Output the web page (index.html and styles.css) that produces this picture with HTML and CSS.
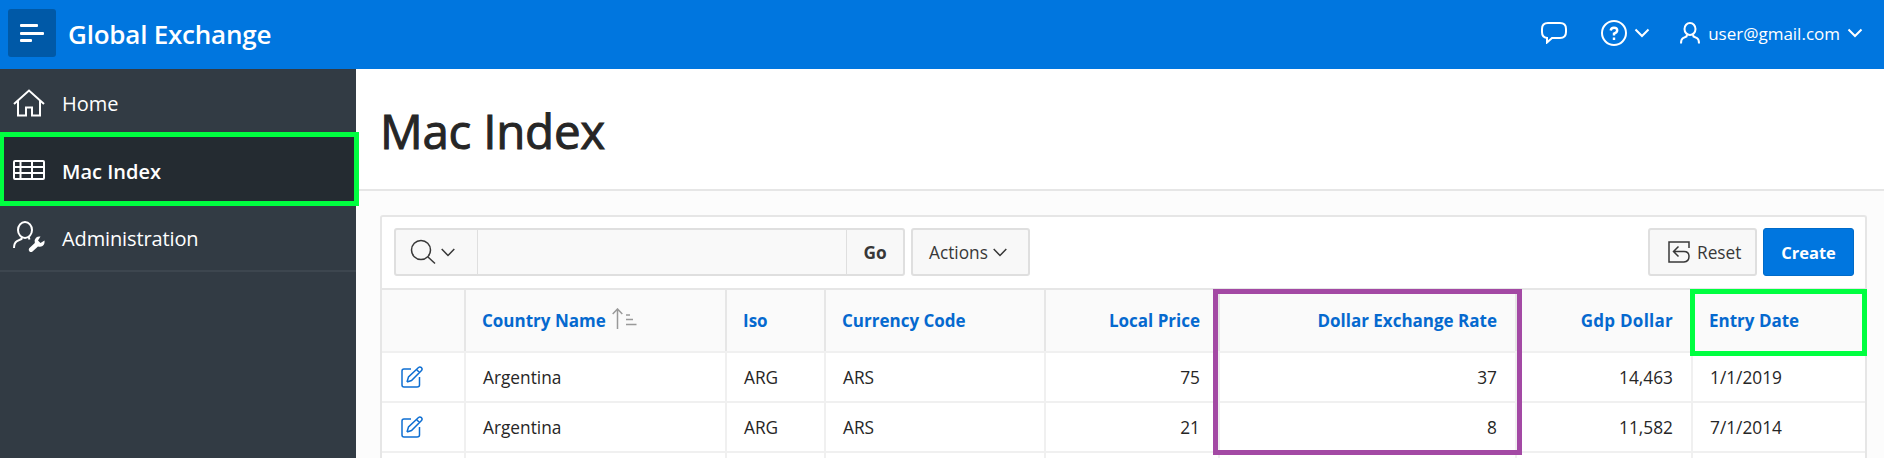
FILE: index.html
```html
<!DOCTYPE html>
<html lang="en">
<head>
<meta charset="utf-8">
<title>Mac Index</title>
<link rel="stylesheet" href="styles.css">
</head>
<body>
<header class="topbar">
  <button class="menu-btn" aria-label="Menu"><svg width="24" height="18" viewBox="0 0 24 18" fill="#fff"><rect width="18" height="3" rx="1"/><rect y="8" width="24" height="3" rx="1"/><rect y="15" width="12" height="3" rx="1"/></svg></button>
  <span class="brand">Global Exchange</span>
  <div class="topnav">
    <svg class="chat" width="26" height="22" viewBox="0 0 26 22"><path d="M7 1H19Q25 1 25 7V10Q25 16 19 16H11L6 20.500V16Q1 15.500 1 10V7Q1 1 7 1Z"/></svg>
    <svg class="help" width="26" height="26" viewBox="0 0 26 26"><circle cx="13" cy="13" r="12"/><path stroke-width="2.400" d="M9.700 10.500Q10 7.700 13 7.700Q16.200 7.700 16.200 10.300Q16.200 12.500 13 13.600V15.500M13 17.600V20"/></svg>
    <svg class="chev chev-help" width="16" height="10" viewBox="0 0 16 10"><path d="M1.500 1.500L8 8L14.500 1.500"/></svg>
    <svg class="person" width="20" height="22" viewBox="0 0 20 22"><ellipse cx="10" cy="7" rx="5.500" ry="6"/><path d="M7 12.500L6.500 14.500L3 16.200Q1 17.300 1 21.500M13 12.500L13.500 14.500L17 16.200Q19 17.300 19 21.500"/></svg>
    <span class="user">user@gmail.com</span>
    <svg class="chev" width="16" height="10" viewBox="0 0 16 10"><path d="M1.500 1.500L8 8L14.500 1.500"/></svg>
  </div>
</header>
<div class="body">
  <nav class="sidebar">
    <a class="item"><svg width="32" height="28" viewBox="0 0 32 28"><path d="M1 15L16 1.500L31 15M5 12V26.500H13V18.500H19V26.500H27V12"/></svg><span class="n-home">Home</span></a>
    <a class="item current"><svg width="32" height="20" viewBox="0 0 32 20"><rect x="1" y="1" width="30" height="18" rx="1"/><path d="M1 7H31M1 13H31M7.500 1V19M19 1V19"/></svg><span class="n-mac">Mac Index</span></a>
    <a class="item"><svg width="32" height="32" viewBox="0 0 32 32"><ellipse cx="12" cy="9" rx="7" ry="8"/><path d="M9 15.500L8.500 18L4 20.200Q1 22 1 27M15.500 15.500L16.500 18.500"/><path fill="currentColor" stroke="none" d="M27.500 15.500L25 19.500L27.500 22L31.500 19.500Q32 23 29.500 25Q27.500 26.300 25 25.500L19.500 30.500Q18 31.500 16.500 30.500Q15 29 16.200 27.300L21.800 22Q21 18.500 23 16.700Q25 15 27.500 15.500Z"/></svg><span class="n-admin">Administration</span></a>
  </nav>
  <main class="main">
    <div class="title"><h1>Mac Index</h1></div>
    <section class="report">
      <div class="toolbar">
        <div class="search">
          <button class="find" aria-label="Search columns"><svg width="26" height="26" viewBox="0 0 26 26"><circle cx="11" cy="11" r="9.500"/><path d="M18 18L25 24.500"/></svg><svg class="small" width="14" height="9" viewBox="0 0 14 9"><path d="M.700 1L7 7.500L13.300 1"/></svg></button>
          <input class="field" aria-label="Search">
          <button class="go"><span>Go</span></button>
        </div>
        <button class="btn actions"><span>Actions</span><svg width="14" height="9" viewBox="0 0 14 9"><path d="M.700 1L7 7.500L13.300 1"/></svg></button>
        <button class="btn reset"><svg width="22" height="22" viewBox="0 0 22 22"><path d="M21 7V1H1V21H16Q21 20.500 21 15.500Q21 10.500 16 10.500H5.500M10.500 5.500L5.500 10.500L10.500 15.500"/></svg><span>Reset</span></button>
        <button class="create"><span>Create</span></button>
      </div>
      <div class="grid">
        <div class="row head">
          <div class="c"></div>
          <div class="c"><span>Country Name</span><svg class="sort" width="25" height="22" viewBox="0 0 25 22"><path d="M5.500 21V1M.700 6L5.500 1L10.300 6M14 7H18M14 11.500H21M14 16.500H24.500"/></svg></div>
          <div class="c"><span>Iso</span></div>
          <div class="c"><span>Currency Code</span></div>
          <div class="c num"><span>Local Price</span></div>
          <div class="c num"><span>Dollar Exchange Rate</span></div>
          <div class="c num"><span class="h-gdp">Gdp Dollar</span></div>
          <div class="c"><span>Entry Date</span></div>
        </div>
        <div class="row">
          <div class="c edit"><svg width="22" height="22" viewBox="0 0 22 22"><path d="M10 3H3Q1 3 1 5V19Q1 21 3 21H16Q18.500 21 18.500 19V11M6 16L7.500 11L17.500 1.500Q19 .500 20.500 1.700Q21.700 3 20.500 4.500L10.500 14.500L6 16M15.500 3.500L18.500 6.500"/></svg></div>
          <div class="c"><span>Argentina</span></div><div class="c"><span>ARG</span></div><div class="c"><span>ARS</span></div>
          <div class="c num"><span>75</span></div><div class="c num"><span>37</span></div><div class="c num"><span>14,463</span></div><div class="c"><span>1/1/2019</span></div>
        </div>
        <div class="row">
          <div class="c edit"><svg width="22" height="22" viewBox="0 0 22 22"><path d="M10 3H3Q1 3 1 5V19Q1 21 3 21H16Q18.500 21 18.500 19V11M6 16L7.500 11L17.500 1.500Q19 .500 20.500 1.700Q21.700 3 20.500 4.500L10.500 14.500L6 16M15.500 3.500L18.500 6.500"/></svg></div>
          <div class="c"><span>Argentina</span></div><div class="c"><span>ARG</span></div><div class="c"><span>ARS</span></div>
          <div class="c num"><span>21</span></div><div class="c num"><span>8</span></div><div class="c num"><span>11,582</span></div><div class="c"><span>7/1/2014</span></div>
        </div>
        <div class="row last"><div class="c"></div><div class="c"></div><div class="c"></div><div class="c"></div><div class="c"></div><div class="c"></div><div class="c"></div><div class="c"></div></div>
      </div>
    </section>
  </main>
</div>
<div class="mark mark-nav"></div>
<div class="mark mark-rate"></div>
<div class="mark mark-date"></div>
</body>
</html>
```
FILE: styles.css
```css
* { box-sizing: border-box; }
body { margin: 0; width: 1884px; height: 458px; overflow: hidden; position: relative; font-family: "Open Sans", "Noto Sans", sans-serif; font-size: 17.3px; color: #262626; background: #fcfcfc; }
svg { fill: none; stroke: currentColor; stroke-width: 1.5; flex: none; display: block; }
span { white-space: nowrap; }
button { font: inherit; color: inherit; padding: 0; margin: 0; display: flex; align-items: center; }

.topbar { height: 69px; background: #0076df; color: #fff; display: flex; align-items: center; padding: 0 21px 0 8px; }
.menu-btn { width: 48px; height: 48px; margin-top: -3px; border: 0; border-radius: 3px; background: #0059a7; justify-content: center; }
.menu-btn svg { fill: #fff; stroke: none; }
.brand { font-size: 26px; font-weight: 600; margin: -2px 0 0 12px; letter-spacing: -.22px; }
.topnav { margin-left: auto; display: flex; align-items: center; height: 66px; margin-top: -3px; }
.topnav svg { stroke-width: 2; }
.help { margin-left: 34px; }
.chev-help { margin-left: 7px; }
.person { margin: 0 8px 0 30px; }
.user { font-size: 17px; margin-right: 7px; margin-top: 0; }

.body { display: flex; height: 389px; overflow: hidden; }
.sidebar { width: 356px; background: #323b44; color: #fff; flex: none; }
.item { height: 67px; display: flex; align-items: center; padding-left: 13px; gap: 17px; font-size: 20px; }
.item span { padding-top: 2px; }
.item svg { stroke-width: 2; }
.item.current { height: 68px; background: #242b31; font-weight: 600; }
.item:last-child { height: 68px; border-bottom: 2px solid #3d464f; }
.n-admin { letter-spacing: -.12px; }

.main { flex: 1; display: flex; flex-direction: column; }
.title { flex: none; height: 122px; background: #fff; border-bottom: 2px solid #e6e6e6; padding-left: 25px; display: flex; align-items: center; }
h1 { margin: 4px 0 0 -1px; font-size: 47.5px; font-weight: 400; line-height: 60px; letter-spacing: -.25px; -webkit-text-stroke: 1px #262626; }
.report { flex: 1 0 auto; margin: 24px 17px 0 24px; border: 2px solid #e6e6e6; border-bottom: 0; border-radius: 3px 3px 0 0; background: #fff; }
.toolbar { height: 71px; display: flex; align-items: center; padding: 0 11px 1px 12px; color: #383838; }
.search { display: flex; height: 48px; width: 511px; background: #f8f8f8; border: 2px solid #dfdfdf; border-radius: 3px; }
.search button, .field { border: 0; background: none; height: 100%; }
.find { width: 81px; padding-left: 14px; gap: 5px; }
.field { flex: 1; min-width: 0; padding: 0; background: #f9f9f9; border-left: 1px solid #dfdfdf !important; border-right: 1px solid #dfdfdf !important; }
.go { width: 56px; justify-content: center; font-weight: 700; }
.btn { height: 48px; border: 2px solid #dfdfdf; border-radius: 3px; background: #f8f8f8; }
.actions { width: 119px; margin-left: 6px; padding-left: 16px; gap: 5px; }
.reset { width: 109px; margin-left: auto; padding-left: 18px; gap: 7px; }
.create { width: 91px; height: 48px; margin-left: 6px; border: 1px solid #006bc9; border-radius: 3px; background: #0076df; color: #fff; font-size: 16.5px; font-weight: 700; justify-content: center; }
.toolbar span { padding-top: 1px; }

.grid { border-top: 2px solid #e6e6e6; }
.row { display: grid; grid-template-columns: 84px 261px 99px 220px 174px 297px 176px 172px; height: 50px; border-bottom: 2px solid #f0f0f0; }
.c { display: flex; align-items: center; padding: 0 17px; border-right: 2px solid #f0f0f0; }
.c:last-child { border-right: 0; }
.num { justify-content: flex-end; padding-right: 18px; }
.head { height: 63px; background: #fafafa; color: #0569cf; font-size: 17px; font-weight: 700; }
.head .c { border-color: #e6e6e6; padding-left: 16px; }
.h-gdp { letter-spacing: .25px; }
.sort { color: #999; margin: -3px 0 0 6px; }
.edit { color: #0f6fd2; padding-left: 19px; }
.last { border: 0; }

.mark { position: absolute; border: 5px solid #00ff40; }
.mark-nav { left: -1px; top: 132px; width: 360px; height: 74px; }
.mark-rate { left: 1213px; top: 289px; width: 309px; height: 166px; border-color: #a349a4; }
.mark-date { left: 1690px; top: 289px; width: 177px; height: 67px; }
```
